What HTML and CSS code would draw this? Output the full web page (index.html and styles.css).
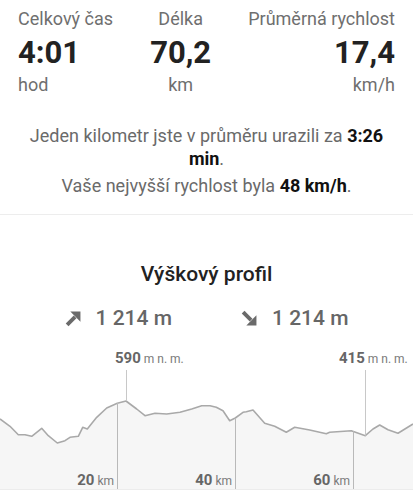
FILE: index.html
```html
<!DOCTYPE html>
<html lang="cs">
<head>
    <meta charset="UTF-8">
    <meta name="viewport" content="width=device-width, initial-scale=1.0">
    <title>Souhrn jízdy</title>
    <link rel="stylesheet" href="styles.css">
</head>
<body>

<div class="stats">
    <div class="stat stat-left">
        <div class="stat-label">Celkový čas</div>
        <div class="stat-value">4:01</div>
        <div class="stat-unit">hod</div>
    </div>
    <div class="stat stat-center">
        <div class="stat-label">Délka</div>
        <div class="stat-value">70,2</div>
        <div class="stat-unit">km</div>
    </div>
    <div class="stat stat-right">
        <div class="stat-label">Průměrná rychlost</div>
        <div class="stat-value">17,4</div>
        <div class="stat-unit">km/h</div>
    </div>
</div>

<div class="summary">
    <p>Jeden kilometr jste v průměru urazili za <b>3:26</b> <b>min</b>.</p>
    <p class="second">Vaše nejvyšší rychlost byla <b>48 km/h</b>.</p>
</div>

<div class="divider"></div>

<h2 class="title">Výškový profil</h2>

<div class="climb">
    <div class="climb-item">
        <svg width="17" height="17" viewBox="0 0 16 16">
            <path d="M2 14 L9.5 6.5" stroke="#6a6a6a" stroke-width="3.6" fill="none"/>
            <path d="M5 1.5 L14.5 1.5 L14.5 11 Z" fill="#6a6a6a"/>
        </svg>
        <span>1 214 m</span>
    </div>
    <div class="climb-item">
        <svg width="17" height="17" viewBox="0 0 16 16">
            <path d="M2 2 L9.5 9.5" stroke="#6a6a6a" stroke-width="3.6" fill="none"/>
            <path d="M5 14.5 L14.5 14.5 L14.5 5 Z" fill="#6a6a6a"/>
        </svg>
        <span>1 214 m</span>
    </div>
</div>

<div class="chart">
    <svg class="chart-svg" width="413" height="150" viewBox="0 0 413 150">
        <polygon class="area" points="0,79 10,86.3 18.3,94.7 25,94.7 31.7,96.3 41.7,88.3 48.3,95.7 57.3,103 65,100.7 70,97.3 78.3,96.3 82.7,87.3 87.3,89 96.7,77.3 106.7,68 117.3,63.3 126,61 136.7,69 145,75.7 155,73.3 166.7,74 180,72.3 191.7,69 201.7,65.7 210,65.7 216.3,67.3 223,70.7 229.7,80.7 235.3,78 243,72.3 246.3,71.7 253,70 264.7,83.3 274.7,86.3 286.3,92.3 294.7,87.3 309.7,90 326.3,93.7 329.7,92.3 351.3,90.7 365.3,95.7 373,89 379.7,85 388,89.7 398,93.3 413,84 413,149 0,149"/>
        <polyline class="profile" points="0,79 10,86.3 18.3,94.7 25,94.7 31.7,96.3 41.7,88.3 48.3,95.7 57.3,103 65,100.7 70,97.3 78.3,96.3 82.7,87.3 87.3,89 96.7,77.3 106.7,68 117.3,63.3 126,61 136.7,69 145,75.7 155,73.3 166.7,74 180,72.3 191.7,69 201.7,65.7 210,65.7 216.3,67.3 223,70.7 229.7,80.7 235.3,78 243,72.3 246.3,71.7 253,70 264.7,83.3 274.7,86.3 286.3,92.3 294.7,87.3 309.7,90 326.3,93.7 329.7,92.3 351.3,90.7 365.3,95.7 373,89 379.7,85 388,89.7 398,93.3 413,84"/>
        <line class="marker" x1="126.5" y1="30" x2="126.5" y2="61"/>
        <line class="marker" x1="365.5" y1="30" x2="365.5" y2="95.5"/>
        <line class="km-line" x1="117.5" y1="63" x2="117.5" y2="149"/>
        <line class="km-line" x1="235.5" y1="78" x2="235.5" y2="149"/>
        <line class="km-line" x1="353.5" y1="91" x2="353.5" y2="149"/>
        <line class="base" x1="0" y1="149.5" x2="413" y2="149.5"/>
    </svg>

    <div class="peak" style="left: 115px;"><b>590</b> m n. m.</div>
    <div class="peak" style="left: 339px;"><b>415</b> m n. m.</div>

    <div class="km" style="right: 299px;"><b>20</b> km</div>
    <div class="km" style="right: 181px;"><b>40</b> km</div>
    <div class="km" style="right: 63px;"><b>60</b> km</div>
</div>

</body>
</html>
```

FILE: styles.css
```css
body {
    font-family: Roboto, "Noto Sans", sans-serif;
    background-color: white;
    margin: 0;
    padding: 0;
    color: #222;
}

.stats {
    display: flex;
    justify-content: space-between;
    padding: 9px 18px 0 18px;
}

.stat-center {
    text-align: center;
}

.stat-right {
    text-align: right;
}

.stat-label {
    font-size: 18px;
    line-height: 20px;
    color: #6f6f6f;
}

.stat-value {
    font-size: 31px;
    line-height: 36px;
    font-weight: bold;
    color: #222;
    margin-top: 6px;
}

.stat-unit {
    font-size: 18px;
    line-height: 20px;
    color: #6f6f6f;
    margin-top: 4px;
}

.summary {
    padding: 0 18px;
    margin-top: 29px;
    text-align: center;
}

.summary p {
    margin: 0;
    font-size: 18px;
    line-height: 23px;
    color: #6a6a6a;
}

.summary p.second {
    margin-top: 4px;
}

.summary b {
    color: #111;
}

.divider {
    height: 1px;
    background-color: #ededed;
    margin-top: 17px;
}

.title {
    margin: 47px 0 0 0;
    text-align: center;
    font-size: 21px;
    line-height: 24px;
    font-weight: 500;
    color: #222;
}

.climb {
    display: flex;
    justify-content: center;
    gap: 69px;
    margin-top: 20px;
    height: 24px;
}

.climb-item {
    display: flex;
    align-items: center;
    gap: 14px;
    font-size: 21px;
    font-weight: 500;
    color: #666;
}

.chart {
    position: relative;
    margin-top: 10px;
    height: 150px;
}

.chart-svg {
    display: block;
}

.area {
    fill: #f6f6f6;
}

.profile {
    fill: none;
    stroke: #a9a9a9;
    stroke-width: 1.6;
    stroke-linejoin: round;
}

.marker {
    stroke: #c8c8c8;
    stroke-width: 1;
}

.km-line {
    stroke: #b9b9b9;
    stroke-width: 1;
}

.base {
    stroke: #ececec;
    stroke-width: 1;
}

.peak, .km {
    position: absolute;
    font-size: 12px;
    line-height: 18px;
    color: #7a7a7a;
    white-space: nowrap;
}

.peak b, .km b {
    font-size: 15px;
    color: #666;
}

.peak {
    top: 9px;
}

.km {
    top: 131px;
}
```
